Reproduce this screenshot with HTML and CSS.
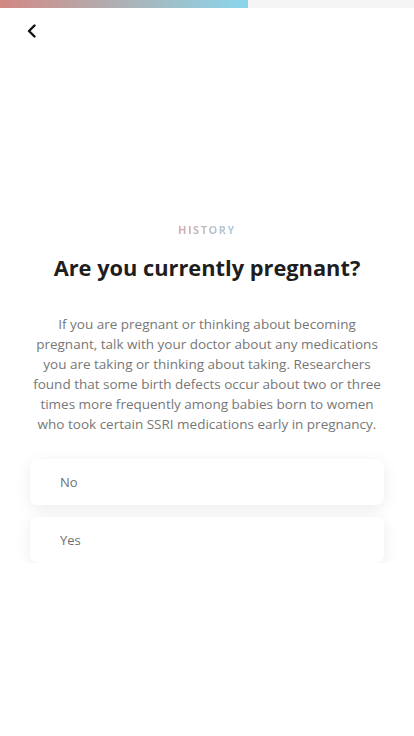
FILE: index.html
```html
<!DOCTYPE html>
<html lang="en">
<head>
    <meta charset="UTF-8">
    <meta name="viewport" content="width=device-width, initial-scale=1.0">
    <title>History</title>
    <link rel="stylesheet" href="styles.css">
</head>
<body>
    <div class="progress">
        <div class="progressFill"></div>
    </div>

    <div class="topBar">
        <button class="backBtn" type="button" aria-label="Back">
            <svg width="12" height="14" viewBox="0 0 12 14">
                <path d="M8.5 1.5 L3 7 L8.5 12.5" fill="none" stroke="#111" stroke-width="2.4" stroke-linecap="round" stroke-linejoin="round"/>
            </svg>
        </button>
    </div>

    <div class="content">
        <div class="section">HISTORY</div>
        <h1>Are you currently pregnant?</h1>
        <p class="desc">If you are pregnant or thinking about becoming pregnant, talk with your doctor about any medications you are taking or thinking about taking. Researchers found that some birth defects occur about two or three times more frequently among babies born to women who took certain SSRI medications early in pregnancy.</p>

        <div class="options">
            <div class="option">No</div>
            <div class="option">Yes</div>
        </div>
    </div>
</body>
</html>
```

FILE: styles.css
```css
body {
    font-family: 'Open Sans', 'Noto Sans', sans-serif;
    background-color: #ffffff;
    margin: 0;
    padding: 0;
    color: #222;
}

.progress {
    height: 8px;
    background-color: #f5f5f5;
}

.progressFill {
    width: 248px;
    height: 100%;
    background: linear-gradient(to right, #d38883, #b0aeb1 45%, #8ad6ec);
}

.topBar {
    height: 46px;
    padding: 0 0 0 22px;
    display: flex;
    align-items: center;
}

.backBtn {
    border: none;
    background: none;
    padding: 4px;
    display: flex;
    cursor: pointer;
}

.content {
    padding: 163px 30px 0;
    text-align: center;
}

.section {
    display: inline-block;
    font-size: 11px;
    font-weight: bold;
    letter-spacing: 1.5px;
    background: linear-gradient(to right, #d3a9ad, #a9cfdc);
    -webkit-background-clip: text;
    background-clip: text;
    color: transparent;
    line-height: 14px;
}

h1 {
    font-size: 21.8px;
    font-weight: bold;
    color: #1e1e1e;
    margin: 15px 0 0;
    line-height: 28px;
}

.desc {
    font-size: 13.5px;
    line-height: 20px;
    color: #777;
    margin: 32px 0 0;
    padding: 0;
}

.options {
    margin-top: 25px;
    display: flex;
    flex-direction: column;
    gap: 12px;
}

.option {
    background-color: #ffffff;
    border-radius: 8px;
    box-shadow: 0 4px 16px rgba(0, 0, 0, 0.08);
    height: 46px;
    display: flex;
    align-items: center;
    padding-left: 30px;
    font-size: 13px;
    color: #6f6f6f;
    text-align: left;
}
```
